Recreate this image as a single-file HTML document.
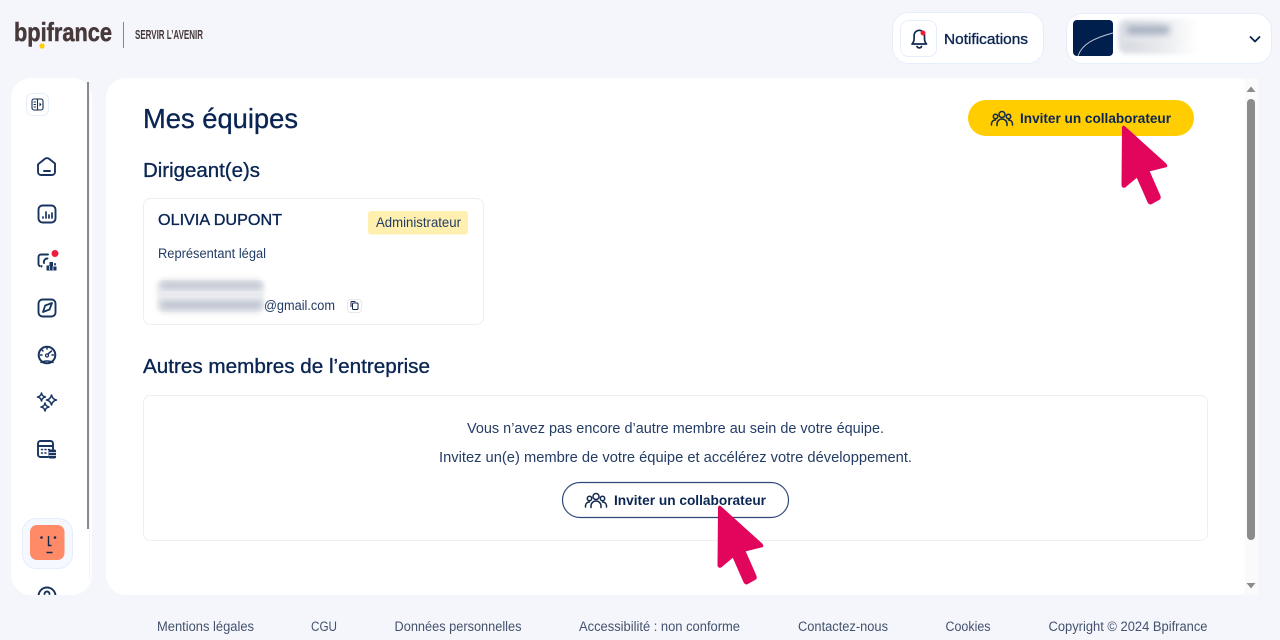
<!DOCTYPE html>
<html lang="fr"><head><meta charset="utf-8"><title>Mes équipes</title>
<style>
html,body{margin:0;padding:0;width:1280px;height:640px;overflow:hidden;background:#f4f6fb}
svg{display:block}
text{font-family:"Liberation Sans",sans-serif;fill:#0a2553;white-space:pre}
.m{stroke:#0a2553;stroke-width:.35}
.b{font-weight:700}
.f{font-size:13.5px;fill:#44526e}
.r{fill:#233c64}
.i{fill:none;stroke:#1a3460;stroke-width:1.9;stroke-linecap:round;stroke-linejoin:round}
</style></head><body>
<svg width="1280" height="640" viewBox="0 0 1280 640" xmlns="http://www.w3.org/2000/svg">
<defs>
<filter id="bl" x="-20%" y="-60%" width="140%" height="220%"><feGaussianBlur stdDeviation="3.500"/></filter>
<filter id="bs" x="-10%" y="-20%" width="120%" height="140%"><feGaussianBlur stdDeviation="2"/></filter>
<linearGradient id="fade" x1="0" x2="1" y1="0" y2="0"><stop offset="0" stop-color="#dde0e7"/><stop offset=".5" stop-color="#e6e8ec"/><stop offset="1" stop-color="#fff"/></linearGradient>
<linearGradient id="fade2" x1="0" x2="1" y1="0" y2="0"><stop offset="0" stop-color="#d2d4da"/><stop offset="1" stop-color="#fff"/></linearGradient>
<clipPath id="side"><rect x="11" y="78" width="81" height="517" rx="20"/></clipPath>
<clipPath id="acc"><rect x="1073" y="20" width="40" height="36" rx="4"/></clipPath>
<g id="team" fill="none" stroke-width="1.5" stroke-linecap="round" stroke-linejoin="round">
<circle cx="0" cy="-4.500" r="3"/><circle cx="-6.500" cy="-2.500" r="2.200"/><circle cx="6.500" cy="-2.500" r="2.200"/>
<path d="M-5 6.500v-1.500a5 5 0 0 1 10 0v1.500M-10.500 6v-1.500a4 4 0 0 1 4-3.500M10.500 6v-1.500a4 4 0 0 0-4-3.500"/>
</g>
<path id="cur" d="M1122.500 127.500Q1123 125 1125 127L1166 164Q1168 167 1165 167L1149 171L1160 196Q1161 199 1158 200L1151 204Q1149 204 1148 202L1137 177L1125 187Q1122 188 1122 185Z" stroke="#e2055c" stroke-width="1" stroke-linejoin="round"/>
</defs>

<!-- logo -->
<text x="14" y="41" font-size="26" font-weight="700" style="fill:#47393a;stroke:#47393a;stroke-width:.5" textLength="98" lengthAdjust="spacingAndGlyphs">bpifrance</text>
<circle cx="42" cy="46" r="2.600" fill="#ffcd00"/>
<rect x="123" y="22" width="1" height="26" fill="#8d8585"/>
<text x="135" y="39" font-size="12.500" font-weight="700" style="fill:#47393a" textLength="68" lengthAdjust="spacingAndGlyphs">SERVIR L’AVENIR</text>

<!-- notifications -->
<rect x="892.500" y="12.500" width="151" height="51" rx="16" fill="#fff" stroke="#e6edfb"/>
<rect x="900.500" y="20.500" width="36" height="36" rx="8" fill="#fff" stroke="#e6edfb"/>
<path class="i" style="stroke:#12294f;stroke-width:1.700" d="M912 44h14.500c-1.500-1.500-2-3-2-5.500v-3a5.200 5.200 0 0 0-10.400 0v3c0 2.500-.6 4-2.100 5.500zM917 46.500a2.500 2.500 0 0 0 4.500 0"/>
<circle cx="923" cy="33" r="2.500" fill="#ee1d3c"/>
<text class="m" x="944" y="44" font-size="14.500" textLength="84" lengthAdjust="spacingAndGlyphs">Notifications</text>

<!-- account -->
<rect x="1066.500" y="13.500" width="205" height="50" rx="16" fill="#fff" stroke="#e6edfb"/>
<rect x="1073" y="20" width="40" height="36" rx="4" fill="#001f4d"/>
<path clip-path="url(#acc)" d="M1078 56C1082 44 1094 38 1113 33" fill="none" stroke="#c5cedd" stroke-width="1"/>
<rect x="1118" y="19" width="80" height="35" rx="9" fill="url(#fade)" filter="url(#bs)"/>
<rect x="1127" y="26" width="42" height="8" fill="#a3acbe" filter="url(#bl)"/>
<rect x="1125" y="44" width="68" height="5" fill="url(#fade2)" filter="url(#bl)"/>
<path d="M1250.500 37l4.500 4.500 4.500-4.500" fill="none" stroke="#0a2553" stroke-width="1.800" stroke-linecap="round" stroke-linejoin="round"/>

<!-- sidebar -->
<g clip-path="url(#side)">
<rect x="11" y="78" width="81" height="517" fill="#fff"/>
<circle class="i" cx="47" cy="596" r="8.500"/>
<path class="i" d="M44.500 594a2.500 2.500 0 0 1 5 0"/>
</g>
<rect x="89" y="90" width="1" height="490" fill="#f3f3f3"/>
<rect x="87" y="82" width="2" height="447" fill="#8b8b8b"/>
<rect x="26.500" y="93.500" width="22" height="22" rx="6" fill="#fff" stroke="#e6edfb"/>
<g class="i" style="stroke-width:1.100;stroke:#12294f">
<rect x="32" y="99" width="11" height="11" rx="2"/><path d="M37.500 99v11M34 102h1.500M34 104.500h1.500M34 107h1.500"/>
</g>
<path d="M39.500 102.500l2 2-2 2z" fill="#12294f"/>

<!-- home -->
<path class="i" d="M39 163.500L45 158.800a3.200 3.200 0 0 1 4 0L55 163.500V172a3 3 0 0 1-3 3H41a3 3 0 0 1-3-3V164.500zM44 171h6"/>
<!-- chart -->
<rect class="i" x="38.500" y="205.500" width="17" height="17" rx="4"/>
<path class="i" d="M43 217v1M46 212v6M49 215v3M52 213v5" style="stroke-width:1.700"/>
<!-- insights -->
<path class="i" d="M48 254.500h-7a2.500 2.500 0 0 0-2.500 2.500v7a2.500 2.500 0 0 0 1 2M44 263a3.500 3.500 0 0 1 3.500-4.500M41.500 266v.5M55 264v.5"/>
<path d="M46.500 270.500v-5h3v-3.500h3.500v4.500h3.500v4z" fill="#1a3460"/>
<path d="M49.500 266v4M53 266.500v4" stroke="#fff" stroke-width=".7"/>
<circle cx="55" cy="253.500" r="3.500" fill="#ee1d3c"/>
<!-- compass -->
<rect class="i" x="38.500" y="299.500" width="17" height="17" rx="4"/>
<path d="M52 303l-2.500 6.500-6.500 2.500 2.200-6.500z" fill="none" stroke="#1a3460" stroke-width="1.800" stroke-linejoin="round"/>
<!-- gauge -->
<circle class="i" cx="47" cy="355" r="8.300" style="stroke-width:2"/>
<path class="i" d="M41 362.500c3.500-2 8.500-2 12 0M47 348v1M40.500 355H42M52 355h1.500M42 350l1 1M48 354l3.500-3" style="stroke-width:1.500"/>
<circle class="i" cx="47" cy="355.500" r="1.500" style="stroke-width:1.300"/>
<!-- sparkles -->
<path class="i" d="M41.500 393c.5 2.500 1.500 3.500 4 4-2.500.5-3.500 1.500-4 4-.5-2.500-1.500-3.500-4-4 2.500-.5 3.500-1.500 4-4zM51.500 395c.6 3 2 4.400 5 5-3 .6-4.400 2-5 5-.6-3-2-4.400-5-5 3-.6 4.400-2 5-5zM45 403c.5 2.500 1.500 3.500 4 4-2.500.5-3.500 1.500-4 4-.5-2.500-1.500-3.500-4-4 2.500-.5 3.500-1.500 4-4z" style="stroke-width:1.600"/>
<!-- calc -->
<path class="i" d="M48 457h-7.500a2.500 2.500 0 0 1-2.500-2.500v-11a2.500 2.500 0 0 1 2.500-2.500h10a2.500 2.500 0 0 1 2.500 2.500v6M38 446h15"/>
<path class="i" d="M41.500 449.500h1M45 449.500h1M48.500 449.500h1M41.500 453h1M45 453h1" style="stroke-width:1.500"/>
<rect x="48.500" y="449.500" width="7.500" height="9" rx="1.500" fill="#1a3460"/>
<path d="M49 452.500h7M49 455.500h7" stroke="#fff" stroke-width=".8"/>
<!-- avatar -->
<rect x="22.500" y="518.500" width="50" height="50" rx="14" fill="#f5f8fe" stroke="#e6edfb"/>
<rect x="30" y="525" width="34.500" height="35" rx="7" fill="#ff8a68"/>
<circle cx="41.500" cy="537.500" r="1.300" fill="#12294f"/><circle cx="55" cy="537.500" r="1.300" fill="#12294f"/>
<path d="M48.500 536v9.500h3M46.500 552.500h6" fill="none" stroke="#12294f" stroke-width="1.400"/>

<!-- main -->
<path d="M126 78H1258V595H126a20 20 0 0 1-20-20V98a20 20 0 0 1 20-20z" fill="#fafafa"/>
<path d="M126 78H1238a7 7 0 0 1 7 7V588a7 7 0 0 1-7 7H126a20 20 0 0 1-20-20V98a20 20 0 0 1 20-20z" fill="#fff"/>
<rect x="1247" y="99" width="8" height="441" rx="4" fill="#8b8b8b"/>
<path d="M1251 86.500l4.500 5.500h-9zM1251 588.500l-4.500-5.500h9z" fill="#8b8b8b"/>

<text class="m" x="143" y="128" font-size="28" textLength="155" lengthAdjust="spacingAndGlyphs">Mes équipes</text>
<rect x="968" y="100" width="226" height="36" rx="18" fill="#ffcd00"/>
<use href="#team" x="1002" y="119" stroke="#12294f"/>
<text class="b" x="1020" y="123" font-size="14" textLength="151" lengthAdjust="spacingAndGlyphs">Inviter un collaborateur</text>

<text class="m" x="143" y="177" font-size="20" textLength="117" lengthAdjust="spacingAndGlyphs">Dirigeant(e)s</text>
<rect x="143.500" y="198.500" width="340" height="126" rx="7" fill="#fff" stroke="#eeeeef"/>
<text class="m" x="158" y="225" font-size="16" textLength="124" lengthAdjust="spacingAndGlyphs">OLIVIA DUPONT</text>
<rect x="368" y="211" width="100" height="23.500" rx="3" fill="#fff0b0"/>
<text x="376" y="227" font-size="14" textLength="85" lengthAdjust="spacingAndGlyphs" class="r">Administrateur</text>
<text x="158" y="258" font-size="13.500" textLength="108" lengthAdjust="spacingAndGlyphs" class="r">Représentant légal</text>
<rect x="157" y="278" width="107" height="36" rx="9" fill="#e8eaee" filter="url(#bs)"/>
<rect x="161" y="283" width="101" height="5" fill="#b0b7c6" filter="url(#bl)"/>
<rect x="161" y="302" width="101" height="6" fill="#b0b7c6" filter="url(#bl)"/>
<text x="264" y="310" font-size="13.500" textLength="71" lengthAdjust="spacingAndGlyphs" class="r">@gmail.com</text>
<rect x="347.500" y="299.500" width="14" height="13" rx="3" fill="#fff" stroke="#e8e8ea"/>
<rect x="352.500" y="303" width="5.500" height="6.500" rx="1" fill="#fff" stroke="#12294f" stroke-width="1"/>
<path d="M351 307v-4.500a1 1 0 0 1 1-1h3.500" fill="none" stroke="#12294f" stroke-width="1"/>

<text class="m" x="143" y="373" font-size="20" textLength="287" lengthAdjust="spacingAndGlyphs">Autres membres de l’entreprise</text>
<rect x="143.500" y="395.500" width="1064" height="145" rx="7" fill="#fff" stroke="#eeeeef"/>
<text x="467" y="433" font-size="14.500" textLength="417" lengthAdjust="spacingAndGlyphs" class="r">Vous n’avez pas encore d’autre membre au sein de votre équipe.</text>
<text x="439" y="462" font-size="14.500" textLength="473" lengthAdjust="spacingAndGlyphs" class="r">Invitez un(e) membre de votre équipe et accélérez votre développement.</text>
<rect x="562.500" y="482.500" width="226" height="35" rx="17.500" fill="#fff" stroke="#2f4a75" stroke-width="1.200"/>
<use href="#team" x="596" y="501" stroke="#12294f"/>
<text class="b" x="614" y="505" font-size="14" textLength="152" lengthAdjust="spacingAndGlyphs">Inviter un collaborateur</text>

<!-- cursors -->
<use href="#cur" fill="#e2055c"/>
<use href="#cur" x="-404" y="380" fill="#e2055c"/>

<!-- footer -->
<text class="f" x="157" y="631" textLength="97" lengthAdjust="spacingAndGlyphs">Mentions légales</text>
<text class="f" x="311" y="631" textLength="26" lengthAdjust="spacingAndGlyphs">CGU</text>
<text class="f" x="394.500" y="631" textLength="127" lengthAdjust="spacingAndGlyphs">Données personnelles</text>
<text class="f" x="579" y="631" textLength="161" lengthAdjust="spacingAndGlyphs">Accessibilité : non conforme</text>
<text class="f" x="798" y="631" textLength="90" lengthAdjust="spacingAndGlyphs">Contactez-nous</text>
<text class="f" x="945.500" y="631" textLength="45" lengthAdjust="spacingAndGlyphs">Cookies</text>
<text class="f" x="1048.500" y="631" textLength="159" lengthAdjust="spacingAndGlyphs">Copyright © 2024 Bpifrance</text>
</svg>
</body></html>
